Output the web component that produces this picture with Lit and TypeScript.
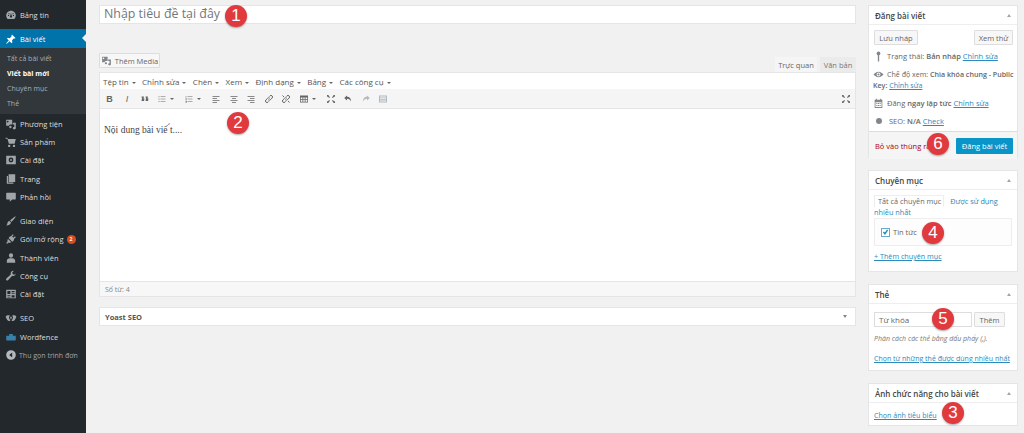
import { LitElement, html, css, svg } from "lit";
import { customElement } from "lit/decorators.js";

const ic: Record<string, any> = {
  dash: svg`<path fill-rule="evenodd" d="M10 3C5.600 3 2 6.600 2 11c0 2.200.9 4.200 2.300 5.600h11.400A8 8 0 0 0 18 11c0-4.400-3.600-8-8-8zM5 10.200h1.800v1.600H5zm8.200 0H15v1.600h-1.800zM10 6.500l1.200 4.700a1.800 1.800 0 1 1-2.400 0zM6.500 6.800l1.200 1.200-1 1-1.200-1.200zm7 0l1 1-1.200 1.200-1-1z"/>`,
  pin: svg`<path d="M11.500 2.500l6 6-1.400 1-1-.6-3.400 3.200.6 3.400-1.400 1.400-3.200-3.200L3 18l-1-1 4.300-4.700-3-3L4.700 8l3.400.6L11.300 5l-.6-1z"/>`,
  media: svg`<path d="M2 3h10v8H8.500a3 3 0 0 0-2 2H2zm2.500 1.500a1.500 1.500 0 1 0 0 3 1.500 1.500 0 0 0 0-3zM13 8h5v9c0 1.200-1.200 2-2.500 2S13 18.200 13 17s1.200-2 2.500-2v-4H13zM7 15a2 2 0 0 1 4 0 2 2 0 0 1-4 0z"/>`,
  cart: svg`<path d="M1 3h3l1 2h13l-2 8H6.500L4 4.500H1zM7 14.500a2 2 0 1 1 0 4 2 2 0 0 1 0-4zm8 0a2 2 0 1 1 0 4 2 2 0 0 1 0-4z"/>`,
  gear: svg`<path fill-rule="evenodd" d="M2 3h16v14H2zm8 3a4 4 0 1 0 0 8 4 4 0 0 0 0-8zm0 2.500a1.500 1.500 0 1 1 0 3 1.500 1.500 0 0 1 0-3z"/>`,
  page: svg`<path d="M6 2h11v13H6zM3 5h2v11h9v2H3z"/>`,
  comment: svg`<path d="M3 3h14a1 1 0 0 1 1 1v9a1 1 0 0 1-1 1h-5l-4 4v-4H3a1 1 0 0 1-1-1V4a1 1 0 0 1 1-1z"/>`,
  brush: svg`<path d="M18 2c.6.600-5 7.500-7 9.500L8.500 9C10.500 7 17.400 1.400 18 2zM7.500 10l2.500 2.500c-.8 3-3.500 5-8 5 2-1.500 1.500-3.500 2.500-5.500.6-1.200 1.800-1.800 3-2z"/>`,
  plug: svg`<path d="M13 2l1.500 1.500L12 6l2 2 2.500-2.500L18 7l-3 3c.5 2-1 3.500-3 4.500L6 8.500C7 6.500 8.500 5 10 5.500zM5 10l5.500 5.500c-1.500.8-3 .8-4 .2L3.500 18 2 16.500 4.300 14C3.800 12.800 4.200 11.200 5 10z"/>`,
  user: svg`<path d="M10 2a3.500 3.500 0 0 1 3.500 3.500c0 2-1.500 4-3.500 4s-3.500-2-3.500-4A3.500 3.500 0 0 1 10 2zM3 15c0-3 2.500-4.500 4.500-4.500h5c2 0 4.500 1.500 4.500 4.500v3H3z"/>`,
  wrench: svg`<path d="M18 5.500a4.500 4.500 0 0 1-6 4.200L5 17c-.8.800-2 .8-2.700 0-.8-.7-.8-1.900 0-2.700l7.300-7A4.500 4.500 0 0 1 14.500 1.500L12 4l1 3 3 1 2-2.500z"/>`,
  set2: svg`<path fill-rule="evenodd" d="M2 3h16v14H2zm2 2v5h5V5zm7 0v1.500h5V5zm0 3v1.500h5V8zm-7 4v1.500h5V12zm7 0v4h5v-4zM4 14.500V16h5v-1.500z"/>`,
  seo: svg`<path d="M1 8c2-3 5-3 7-2l-1.500 3L9 15c-3 .5-5-1-6-3zM19 8c-2-3-5-3-7-2l1.500 3L11 15c3 .5 5-1 6-3zM10 7l1.500 2L10 13 8.500 9z"/>`,
  wf: svg`<path d="M2 8h16v6a2 2 0 0 1-2 2H4a2 2 0 0 1-2-2zM7 5h6v3H7z" opacity=".9"/>`,
  collapse: svg`<path fill-rule="evenodd" d="M10 2a8 8 0 1 0 0 16 8 8 0 0 0 0-16zm2 4v8L7 10z"/>`,
};

const icon = (n: string) => html`<svg class="ic" viewBox="0 0 20 20" fill="currentColor">${ic[n]}</svg>`;

const tb: Record<string, any> = {
  quote: svg`<path d="M3 5h5l-1 4h2l-1 5H3l1-5zM11 5h5l-1 4h2l-1 5h-5l1-5z"/>`,
  ul: svg`<path d="M3 5h2v1.500H3zM7 5h10v1H7zM3 9.500h2V11H3zM7 9.500h10v1H7zM3 14h2v1.500H3zM7 14h10v1H7z"/>`,
  ol: svg`<path d="M3.500 4h1v3.500h-1zM7 5h10v1H7zM3 9h2.500v1L4 11.500h1.500v.8H3v-.8L4.500 10H3zM7 9.500h10v1H7zM3 14h2.500v3.500H3v-.8h1.500V16h-1v-.6h1V15H3zM7 14h10v1H7z"/>`,
  al: svg`<path d="M3 4h14v1.500H3zM3 8h9v1.500H3zM3 12h14v1.500H3zM3 16h9v1.500H3z"/>`,
  ac: svg`<path d="M3 4h14v1.500H3zM6 8h8v1.500H6zM3 12h14v1.500H3zM6 16h8v1.500H6z"/>`,
  ar: svg`<path d="M3 4h14v1.500H3zM8 8h9v1.500H8zM3 12h14v1.500H3zM8 16h9v1.500H8z"/>`,
  link: svg`<path fill="none" stroke="currentColor" stroke-width="2" d="M8.500 11.500a3 3 0 0 0 4.300 0l3.400-3.400a3 3 0 0 0-4.300-4.300L10.500 5.200M11.500 8.500a3 3 0 0 0-4.300 0l-3.400 3.400a3 3 0 0 0 4.300 4.300l1.400-1.400"/>`,
  unlink: svg`<path fill="none" stroke="currentColor" stroke-width="2" d="M8.500 11.500a3 3 0 0 0 4.300 0l3.400-3.400a3 3 0 0 0-4.300-4.300L10.500 5.200M11.500 8.500a3 3 0 0 0-4.300 0l-3.400 3.400a3 3 0 0 0 4.300 4.300l1.400-1.400M3 3l3 3M14 14l3 3"/>`,
  table: svg`<path fill-rule="evenodd" d="M2 3h16v14H2zm1.500 4v3h3.500V7zm5 0v3h3V7zm4.500 0v3h3.500V7zM3.500 11.500v4h3.500v-4zm5 0v4h3v-4zm4.500 0v4h3.500v-4z"/>`,
  full: svg`<path d="M2 2h4L4.800 3.200 8 6.500 6.500 8 3.200 4.800 2 6zM18 2v4l-1.200-1.200L13.500 8 12 6.500l3.200-3.300L14 2zM2 18v-4l1.200 1.200L6.500 12 8 13.500l-3.200 3.300L6 18zM18 18h-4l1.200-1.200L12 13.500l1.500-1.500 3.300 3.200L18 14z"/>`,
  undo: svg`<path d="M8 3L2.500 8 8 13V9.500c4 0 6.500 1.500 8 6 .5-6-3-10-8-10z"/>`,
  redo: svg`<path d="M12 3l5.500 5-5.500 5V9.500c-4 0-6.500 1.500-8 6-.5-6 3-10 8-10z"/>`,
  kitchen: svg`<path fill-rule="evenodd" d="M2 3h16v14H2zm2 2v2h12V5zm0 3.500v1.500h12V8.500zm0 3V13h12v-1.500zm0 3V15.500h12v-1z"/>`,
  eye: svg`<path fill-rule="evenodd" d="M10 5c4 0 7 3 9 5-2 2-5 5-9 5s-7-3-9-5c2-2 5-5 9-5zm0 1.500a3.500 3.500 0 1 0 0 7 3.500 3.500 0 0 0 0-7zM10 8a2 2 0 1 1 0 4 2 2 0 0 1 0-4z"/>`,
  cal: svg`<path fill-rule="evenodd" d="M3 3h2V1.500h2V3h6V1.500h2V3h2v15H3zm1.500 4.500V16.500h11v-9zM6 9h2v2H6zm3 0h2v2H9zm3 0h2v2h-2zm-6 3.500h2v2H6zm3 0h2v2H9zm3 0h2v2h-2z"/>`,
  key: svg`<path d="M10 1a3.500 3.500 0 0 1 3.500 3.500c0 1.500-1 2.800-2.300 3.300V19H8.800V7.800A3.500 3.500 0 0 1 6.500 4.500 3.500 3.500 0 0 1 10 1z"/>`,
};
const ti = (n: string, cls = "") => html`<svg class="ti ${cls}" viewBox="0 0 20 20" fill="currentColor">${tb[n]}</svg>`;

const groups = [
  [{ i: "media", t: "Phương tiện" }, { i: "cart", t: "Sản phẩm" }, { i: "gear", t: "Cài đặt" }, { i: "page", t: "Trang" }, { i: "comment", t: "Phản hồi" }],
  [{ i: "brush", t: "Giao diện" }, { i: "plug", t: "Gói mở rộng", b: "2" }, { i: "user", t: "Thành viên" }, { i: "wrench", t: "Công cụ" }, { i: "set2", t: "Cài đặt" }],
  [{ i: "seo", t: "SEO" }, { i: "wf", t: "Wordfence", c: "wf" }, { i: "collapse", t: "Thu gọn trình đơn", c: "col" }],
];
const menus = ["Tệp tin", "Chỉnh sửa", "Chèn", "Xem", "Định dạng", "Bảng", "Các công cụ"];
const markers = [
  { n: 1, x: 236, y: 16 }, { n: 2, x: 238, y: 123 }, { n: 6, x: 938, y: 144 },
  { n: 4, x: 933, y: 233 }, { n: 5, x: 943, y: 319 }, { n: 3, x: 953, y: 413 },
];

@customElement("app-root")
export class AppRoot extends LitElement {
  static styles = css`
    :host { display: block; width: 1024px; height: 433px; overflow: hidden; position: relative; background: #f1f1f1;
      font-family: "Open Sans", "Noto Sans", sans-serif; font-size: 8px; color: #444; }
    * { box-sizing: border-box; }
    .page { display: flex; height: 433px; }
    nav { width: 86px; flex: none; background: #23282d; color: #ddd; padding-top: 6px; font-size: 7.500px; }
    .mi { height: 18.400px; display: flex; align-items: center; padding-left: 5px; gap: 3px; color: #ddd; white-space: nowrap; position: relative; }
    .mi .ic { width: 12px; height: 12px; color: #a0a5aa; flex: none; }
    .mi.cur { background: #0073aa; color: #fff; height: 19px; margin-top: 5px; }
    .mi.cur .ic { color: #fff; }
    .mi.cur::after { content: ""; position: absolute; right: 0; top: 5px; border: 4px solid transparent; border-right-color: #f1f1f1; border-left: 0; }
    .sub { background: #32373c; height: 66px; padding: 3px 0 0 7px; font-size: 7px; color: #a9aeb3; }
    .sub div { height: 14.800px; display: flex; align-items: center; white-space: nowrap; }
    .sub .on { color: #fff; font-weight: 700; }
    .grp { margin-top: 5.400px; }
    .sub + .grp { margin-top: 0; }
    .badge { width: 9px; height: 9px; border-radius: 50%; background: #d54e21; color: #fff; font-size: 5px; display: inline-flex; align-items: center; justify-content: center; margin-left: 0; font-weight: 700; }
    .mi.wf .ic { color: #3a89b8; }
    .mi.col { color: #a0a5aa; font-size: 7px; gap: 2px; }
    .mi.col .ic { color: #b4b9be; }
    main { flex: 1; display: grid; grid-template-columns: 757px 150px; column-gap: 12px; padding: 5px 0 0 13px; align-items: start; }
    .title { height: 19px; background: #fff; border: 1px solid #e5e5e5; font-size: 12.400px; color: #72777c; display: flex; align-items: center; padding-left: 4px; line-height: 1; white-space: nowrap; }
    .media-row { display: flex; justify-content: space-between; align-items: flex-end; margin-top: 29px; height: 19px; }
    .media { height: 15px; margin-bottom: 4px; width: 61px; display: flex; align-items: center; justify-content: center; gap: 3px; border: 1px solid #ddd; background: #f7f7f7; color: #666; font-size: 7.500px; border-radius: 1px; white-space: nowrap; }
    .media .ic { width: 11px; height: 11px; color: #82878c; flex: none; }
    .tabs { display: flex; gap: 3px; }
    .tab { height: 15px; display: flex; align-items: center; justify-content: center; font-size: 7.500px; color: #666; background: #f5f5f5; }
    .tab.a { width: 42px; }
    .tab.b { width: 36px; background: #ebebeb; color: #777; }
    .editor { background: #fff; border: 1px solid #e5e5e5; height: 225px; display: flex; flex-direction: column; }
    .menubar { height: 16px; display: flex; align-items: center; padding-left: 3px; gap: 6.400px; font-size: 8px; color: #555; background: #fff; white-space: nowrap; }
    .menubar span::after, .dd::after { content: ""; display: inline-block; border: 2px solid transparent; border-top: 2.500px solid #666; border-bottom: 0; margin-left: 3px; vertical-align: 1px; }
    .toolbar { height: 20px; background: #f5f5f5; border-bottom: 1px solid #e5e5e5; display: flex; align-items: center; color: #666; padding-left: 4.500px; position: relative; }
    .toolbar .t { width: 10px; text-align: center; font-size: 9px; font-family: "Liberation Sans", sans-serif; flex: none; }
    .toolbar > * { margin-right: 7.500px; }
    .toolbar .ti { width: 10px; height: 10px; flex: none; }
    .toolbar .last { margin-right: 4px; }
    .ti.dim { color: #b4b9be; }
    .dd { display: inline-flex; align-items: center; }
    .toolbar .dd { margin-right: 10px; }
    .dd::after { margin-left: 3px; }
    .spacer { flex: 1; }
    .content { flex: 1; padding: 16px 4px; font: 9.500px "Liberation Serif", serif; color: #444; }
    .status { height: 15px; background: #f7f7f7; border-top: 1px solid #e5e5e5; font-size: 7px; color: #82878c; display: flex; align-items: center; padding-left: 5px; }
    .yoast { height: 19px; margin-top: 10px; background: #fff; border: 1px solid #e5e5e5; display: flex; justify-content: space-between; align-items: center; padding: 0 8px 0 5px; font-size: 7.500px; font-weight: 700; color: #555; }
    .tri { width: 0; height: 0; border: 2.500px solid transparent; border-top: 3px solid #82878c; border-bottom: 0; }
    .tri.up { border-top: 0; border-bottom: 3px solid #a0a5aa; }
    .box { background: #fff; border: 1px solid #e5e5e5; margin-bottom: 12px; }
    .box h3 { margin: 0; height: 19px; padding: 0 6px; display: flex; justify-content: space-between; align-items: center; font-size: 8px; font-weight: 600; color: #444; border-bottom: 1px solid #eee; white-space: nowrap; }
    a { color: #2a8bbd; text-decoration: underline; }
    b { font-weight: 600; }
    .btn { border: 1px solid #ddd; background: #f7f7f7; color: #666; display: inline-flex; align-items: center; justify-content: center; border-radius: 1px; font-size: 7.500px; }
    .pub { height: 153px; }
    .pub .btns { display: flex; justify-content: space-between; padding: 5px 4px 0 5px; }
    .pub .btns .btn { height: 15px; }
    .pub .btns .save { width: 44px; }
    .pub .btns .preview { width: 39px; }
    .row { padding: 0 4px; font-size: 7.500px; line-height: 11px; color: #666; }
    .row .ti { width: 11px; height: 11px; color: #82878c; vertical-align: -3px; margin-right: 3px; }
    .row1 { margin-top: 6px; } .row2 { margin-top: 7px; font-size: 7.100px; padding-right: 0; } .row3 { margin-top: 7px; } .row4 { margin-top: 7px; }
    .dot { display: inline-block; width: 6px; height: 6px; border-radius: 50%; background: #82878c; margin: 0 7px 0 3px; }
    .pubfoot { height: 28px; margin-top: 4px; background: #f5f5f5; border-top: 1px solid #ddd; display: flex; justify-content: space-between; align-items: center; padding: 0 4px 0 6px; }
    .pubfoot .del { color: #a00; font-size: 7.500px; white-space: nowrap; }
    .primary { width: 57px; height: 16px; background: #0a95c9; border-radius: 1px; color: #fff; font-size: 7.500px; display: flex; align-items: center; justify-content: center; white-space: nowrap; }
    .cat { height: 102px; }
    .ctabs { padding: 5px 5px 0; font-size: 7.300px; line-height: 10px; color: #2a8bbd; }
    .ctabs .cur { display: inline-block; background: #fff; border: 1px solid #eee; border-bottom: 0; padding: 0 2px 0 3px; margin: 0 4px 0 0; color: #666; height: 12px; line-height: 11px; }
    .catlist { margin: 1px 5px 0; height: 28px; border: 1px solid #eee; background: #fdfdfd; display: flex; align-items: center; padding-left: 6px; gap: 3px; font-size: 7.500px; color: #666; }
    .cb { width: 9px; height: 9px; border: 1px solid #6aa8d0; display: flex; align-items: center; justify-content: center; color: #1e8cbe; background: #fff; }
    .cb svg { width: 8px; height: 8px; }
    .add { margin: 5px 5px 0; font-size: 7.200px; display: block; white-space: nowrap; }
    .tag { height: 87px; }
    .tagrow { display: flex; padding: 8px 5px 0; gap: 2px; }
    .tinp { width: 98px; height: 15px; border: 1px solid #ddd; background: #fff; font-size: 8px; display: flex; align-items: center; padding-left: 4px; color: #666; }
    .tadd { width: 31px; height: 15px; }
    .hint { margin: 7px 5px 0; font-size: 7px; font-style: italic; color: #777; white-space: nowrap; }
    .pick { display: block; margin: 11px 5px 0; font-size: 7px; white-space: nowrap; }
    .img { height: 43px; }
    .img a { display: block; margin: 7px 5px 0; font-size: 7.100px; }
    .marker { position: absolute; width: 22px; height: 22px; margin: -11px 0 0 -11px; border-radius: 50%; background: #e03a3e; color: #fff; font: 17px/22px "Liberation Sans", sans-serif; text-align: center; box-shadow: 0 1px 2px rgba(0,0,0,.35); }
  `;

  render() {
    return html`
      <div class="page">
        <nav>
          <div class="mi">${icon("dash")}<span>Bảng tin</span></div>
          <div class="mi cur">${icon("pin")}<span>Bài viết</span></div>
          <div class="sub">
            <div>Tất cả bài viết</div><div class="on">Viết bài mới</div><div>Chuyên mục</div><div>Thẻ</div>
          </div>
          ${groups.map((g) => html`<div class="grp">${g.map((m: any) => html`<div class="mi ${m.c ?? ""}">${icon(m.i)}<span>${m.t}</span>${m.b ? html`<span class="badge">${m.b}</span>` : ""}</div>`)}</div>`)}
        </nav>
        <main>
          <div>
            <div class="title">Nhập tiêu đề tại đây</div>
            <div class="media-row">
              <div class="media">${icon("media")}<span>Thêm Media</span></div>
              <div class="tabs"><div class="tab a">Trực quan</div><div class="tab b">Văn bản</div></div>
            </div>
            <div class="editor">
              <div class="menubar">${menus.map((m) => html`<span>${m}</span>`)}</div>
              <div class="toolbar">
                <span class="t"><b>B</b></span><span class="t"><i>I</i></span>${ti("quote")}
                <span class="dd">${ti("ul")}</span><span class="dd">${ti("ol")}</span>
                ${ti("al")}${ti("ac")}${ti("ar")}${ti("link")}${ti("unlink")}
                <span class="dd">${ti("table")}</span>${ti("full")}${ti("undo")}${ti("redo", "dim")}${ti("kitchen", "dim")}
                <span class="spacer"></span>${ti("full", "last")}
              </div>
              <div class="content">Nội dung bài viế ́t....</div>
              <div class="status">Số từ: 4</div>
            </div>
            <div class="yoast"><span>Yoast SEO</span><span class="tri"></span></div>
          </div>
          <aside>
            <div class="box pub">
              <h3><span>Đăng bài viết</span><span class="tri up"></span></h3>
              <div class="btns"><span class="btn save">Lưu nháp</span><span class="btn preview">Xem thử</span></div>
              <div class="row row1">${ti("key")}Trạng thái: <b>Bản nháp</b> <a>Chỉnh sửa</a></div>
              <div class="row row2">${ti("eye")}Chế độ xem: <b>Chìa khóa chung - Public Key:</b> <a>Chỉnh sửa</a></div>
              <div class="row row3">${ti("cal")}Đăng <b>ngay lập tức</b> <a>Chỉnh sửa</a></div>
              <div class="row row4"><span class="dot"></span>SEO: <b>N/A</b> <a>Check</a></div>
              <div class="pubfoot"><span class="del">Bỏ vào thùng rác</span><span class="primary">Đăng bài viết</span></div>
            </div>
            <div class="box cat">
              <h3><span>Chuyên mục</span><span class="tri up"></span></h3>
              <div class="ctabs"><span class="cur">Tất cả chuyên mục</span> Được sử dụng nhiều nhất</div>
              <div class="catlist"><span class="cb"><svg viewBox="0 0 10 10" fill="none" stroke="currentColor" stroke-width="2"><path d="M2 5l2.200 2.500L8 2"/></svg></span>Tin tức</div>
              <a class="add">+ Thêm chuyên mục</a>
            </div>
            <div class="box tag">
              <h3><span>Thẻ</span><span class="tri up"></span></h3>
              <div class="tagrow"><div class="tinp">Từ khóa</div><span class="btn tadd">Thêm</span></div>
              <div class="hint">Phân cách các thẻ bằng dấu phẩy (,).</div>
              <a class="pick">Chọn từ những thẻ được dùng nhiều nhất</a>
            </div>
            <div class="box img">
              <h3><span>Ảnh chức năng cho bài viết</span><span class="tri up"></span></h3>
              <a>Chọn ảnh tiêu biểu</a>
            </div>
          </aside>
        </main>
      </div>
      ${markers.map((m) => html`<div class="marker" style="left:${m.x}px;top:${m.y}px">${m.n}</div>`)}
    `;
  }
}
